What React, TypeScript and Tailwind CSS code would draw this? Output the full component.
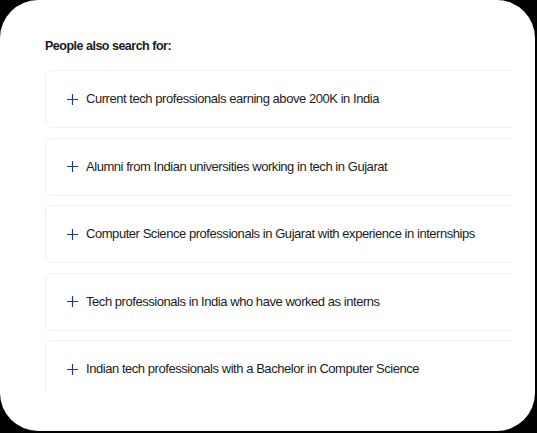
const suggestions = [
  "Current tech professionals earning above 200K in India",
  "Alumni from Indian universities working in tech in Gujarat",
  "Computer Science professionals in Gujarat with experience in internships",
  "Tech professionals in India who have worked as interns",
  "Indian tech professionals with a Bachelor in Computer Science",
]

function PlusIcon() {
  return (
    <svg width="11" height="11" viewBox="0 0 11 11" className="shrink-0 text-[#1e3a8a]" aria-hidden="true">
      <path d="M5.5 0v11M0 5.5h11" stroke="currentColor" strokeWidth="1.2" fill="none" />
    </svg>
  )
}

export default function App() {
  return (
    <div className="h-[433px] w-[537px] bg-black font-['Liberation_Sans',Arial,sans-serif]">
      <div className="flex h-[431px] w-[535px] flex-col overflow-hidden rounded-[38px] bg-white pl-[45px] pt-[38px]">
        <p className="text-[12.5px] font-bold leading-4 tracking-[-0.5px] text-[#1a1a1a]">People also search for:</p>
        <div className="mt-[16px] h-[322px] w-[467px] overflow-hidden">
          <div className="flex w-[490px] flex-col gap-[9.5px]">
            {suggestions.map((s) => (
              <div
                key={s}
                className="flex h-[58px] items-center gap-[8px] rounded-[7px] border border-[#efefef] pl-[21px]"
              >
                <PlusIcon />
                <span className="text-[13px] tracking-[-0.45px] text-[#1c1c1c]">{s}</span>
              </div>
            ))}
          </div>
        </div>
      </div>
    </div>
  )
}
